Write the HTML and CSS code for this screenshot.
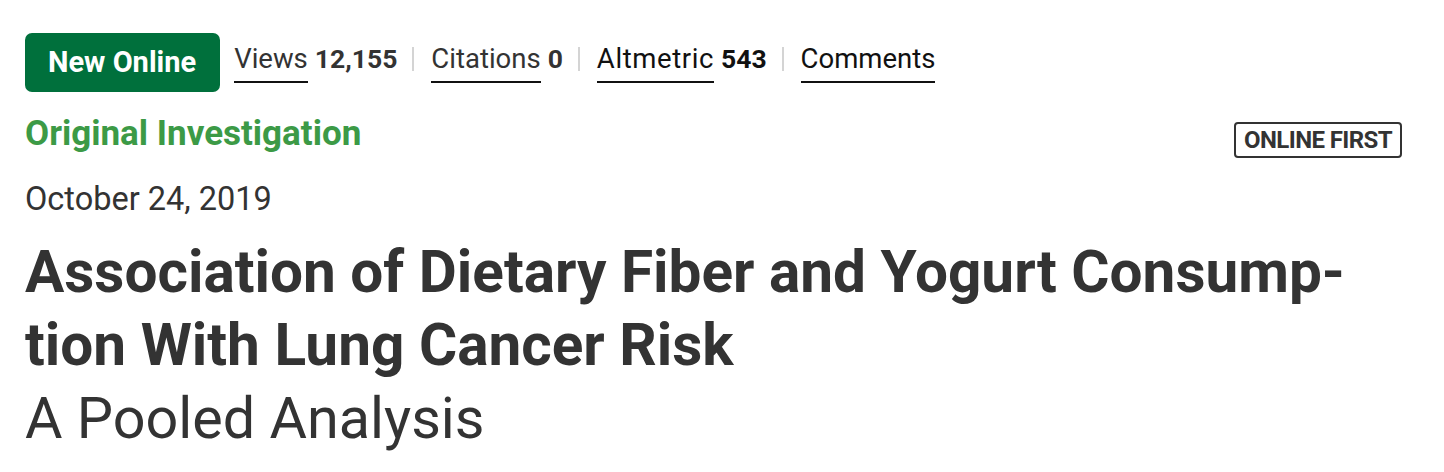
FILE: index.html
```html
<!DOCTYPE html>
<html lang="en">
<head>
    <meta charset="UTF-8">
    <meta name="viewport" content="width=device-width, initial-scale=1.0">
    <title>Association of Dietary Fiber and Yogurt Consumption With Lung Cancer Risk</title>
    <link rel="stylesheet" href="styles.css">
</head>
<body>

<div class="article-header">

    <!-- Badge and metrics -->
    <div class="meta-row">
        <span class="new-online">New Online</span>
        <a class="metric-link" href="#">Views</a>
        <span class="metric-num">12,155</span>
        <span class="sep"></span>
        <a class="metric-link" href="#">Citations</a>
        <span class="metric-num">0</span>
        <span class="sep"></span>
        <a class="metric-link dark wide" href="#">Altmetric</a>
        <span class="metric-num dark">543</span>
        <span class="sep"></span>
        <a class="metric-link dark" href="#">Comments</a>
    </div>

    <div class="type-row">
        <div class="article-type">Original Investigation</div>
        <div class="online-first">ONLINE FIRST</div>
    </div>

    <div class="pub-date">October 24, 2019</div>

    <h1 class="article-title">Association of Dietary Fiber and Yogurt Consump-<br>tion With Lung Cancer Risk</h1>
    <div class="article-subtitle">A Pooled Analysis</div>

</div>

</body>
</html>
```

FILE: styles.css
```css
body {
    margin: 0;
    font-family: Roboto, "Noto Sans", Arial, sans-serif;
    color: #333;
    background-color: white;
}

.article-header {
    padding: 33px 42px 0 25px;
}

/* top row with green badge and metric links */
.meta-row {
    display: flex;
    align-items: center;
}

.new-online {
    background-color: #00703c;
    color: white;
    font-size: 29px;
    font-weight: bold;
    line-height: 33px;
    padding: 13px 24px 13px 23px;
    border-radius: 7px;
    margin-right: 14px;
}

.metric-link {
    font-size: 27.5px;
    line-height: 32px;
    color: #333;
    text-decoration: none;
    padding-bottom: 6px;
    border-bottom: 2px solid #111;
}

.metric-link.wide {
    letter-spacing: 0.6px;
}

.metric-num {
    font-size: 26.5px;
    line-height: 32px;
    font-weight: bold;
    color: #333;
    margin-left: 7px;
    padding-bottom: 8px;
}

.dark {
    color: #111;
}

.sep {
    width: 2px;
    height: 24px;
    background-color: #d4d4d4;
    margin: 0 17px 8px 15px;
}

/* article type + online first */
.type-row {
    display: flex;
    justify-content: space-between;
    align-items: flex-start;
    margin-top: 22px;
}

.article-type {
    font-size: 35px;
    line-height: 40px;
    font-weight: bold;
    color: #3c9a46;
}

.online-first {
    font-size: 24px;
    line-height: 28px;
    font-weight: bold;
    letter-spacing: -0.6px;
    color: #333;
    border: 2px solid #333;
    border-radius: 4px;
    padding: 2px 8px;
    margin-top: 8px;
}

.pub-date {
    font-size: 32.5px;
    line-height: 36px;
    margin-top: 23px;
}

.article-title {
    font-size: 58.5px;
    line-height: 73px;
    font-weight: bold;
    margin: 19px 0 0 0;
}

.article-subtitle {
    font-size: 57.5px;
    line-height: 73px;
}
```
